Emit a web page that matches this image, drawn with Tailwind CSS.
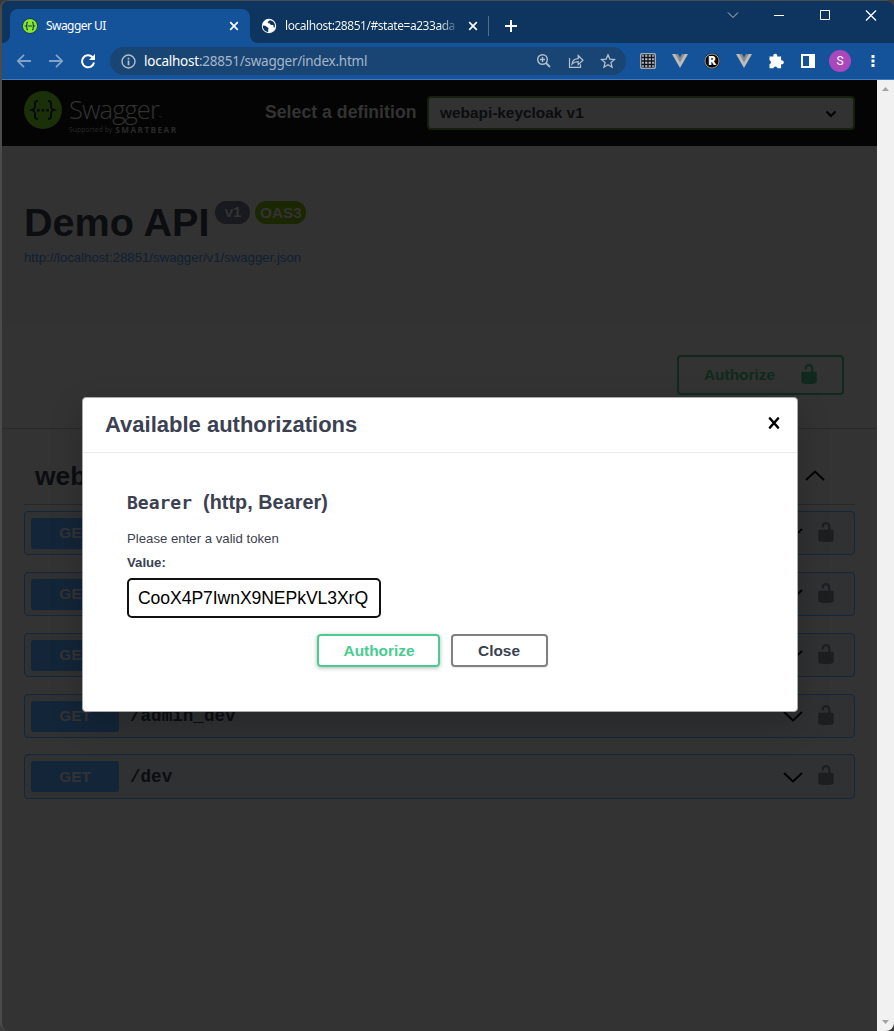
<!DOCTYPE html>
<html lang="en">
<head>
<meta charset="utf-8">
<title>Swagger UI</title>
<script src="https://cdn.jsdelivr.net/npm/@tailwindcss/browser@4"></script>
</head>
<body class="bg-[#3a3a3a] font-['Liberation_Sans',Arial,sans-serif]">
<svg class="hidden">
  <symbol id="lock" viewBox="0 0 20 20"><path d="M15.8 8H14V5.6C14 2.703 12.665 1 10 1 7.334 1 6 2.703 6 5.6V6h2v-.801C8 3.754 8.797 3 10 3c1.203 0 2 .754 2 2.199V8H4c-.553 0-1 .646-1 1.199V17c0 .549.428 1.139.951 1.307l1.197.387C5.672 18.861 6.55 19 7.1 19h5.8c.549 0 1.428-.139 1.951-.307l1.196-.387c.524-.167.953-.757.953-1.306V9.199C17 8.646 16.352 8 15.8 8z"/></symbol>
  <symbol id="down" viewBox="0 0 20 12"><path d="M1 2l9 8.500 9-8.500" fill="none" stroke="#000" stroke-width="1.800"/></symbol>
  <symbol id="vee" viewBox="0 0 16 14"><path d="M0 0h16L8 14z" fill="#bcbcbc"/><path d="M3.200 0h9.600L8 8.600z" fill="#8c8c8c"/><path d="M6 0h4L8 3.400z" fill="#14539a"/></symbol>
  <symbol id="close" viewBox="0 0 10 10"><path d="M1.200 1.200l7.600 7.600M8.800 1.200l-7.600 7.600" fill="none" stroke="#fff" stroke-width="1.700"/></symbol>
</svg>

<div class="relative flex h-[1031px] w-[894px] flex-col overflow-hidden rounded-lg border-l-2 border-t border-l-[#4b4b4b] border-t-[#4b4b4b] bg-[#333]">

  <!-- Tab strip -->
  <div class="flex h-[42px] shrink-0 items-end bg-[#0d355f] font-['Noto_Sans',sans-serif] text-[12px] text-white">
    <div class="flex h-[34px] w-2 items-end bg-[#14539a]"><div class="h-full w-full rounded-br-lg bg-[#0d355f]"></div></div>
    <div class="flex h-[34px] w-[240px] items-center rounded-t-lg bg-[#14539a] pl-[12px] pr-[11px]">
      <svg class="h-4 w-4" viewBox="0 0 16 16"><circle cx="8" cy="8" r="7.700" fill="#173647"/><circle cx="8" cy="8" r="7.100" fill="#85ea2d"/><path d="M6 4.300c-1.400 0-1.100.7-1.100 1.900S4.700 7.700 3.800 8c.9.300 1.100.6 1.100 1.800s-.3 1.900 1.100 1.900M10 4.300c1.400 0 1.100.7 1.100 1.900s.2 1.500 1.100 1.800c-.9.300-1.100.6-1.100 1.800s.3 1.900-1.100 1.900M5.700 8h4.600" fill="none" stroke="#173647" stroke-width="1.100"/></svg>
      <span class="ml-2 grow whitespace-nowrap tracking-[-0.550px]">Swagger UI</span>
      <svg class="h-[10px] w-[10px]"><use href="#close"/></svg>
    </div>
    <div class="h-[34px] w-[230px] bg-[#14539a]">
      <div class="flex h-full items-center rounded-bl-lg bg-[#0d355f] pl-[11px]">
        <svg class="h-4 w-4 shrink-0" viewBox="0 0 16 16"><circle cx="8" cy="8" r="7.200" fill="#fff"/><path d="M1.800 7.500l2.300.2c1 .1 1.300.6 1.700 1.200.5.700 1.600.3 1.700 1.200.1 1-.5 1.400-.3 2.400.1.700.2 1.300-.3 1.500C4.200 13.500 1.500 11 1.800 7.500zM8.600 2.200c-.2 1-1.800 1-1.900 2-.1.900.8 1.200 1.500 1.100.9-.1.800 1.200 1.600 1.500.9.300 2.100-.2 2.600.5.400.6-.2 1.400.3 2 .4.400.8.200 1 .1C14.800 5.800 12.500 2.500 8.600 2.200z" fill="#0d355f"/></svg>
        <span class="ml-2 w-[175px] whitespace-nowrap bg-linear-to-r from-white from-[88%] to-white/0 bg-clip-text tracking-[-0.450px] text-transparent">localhost:28851/#state=a233ada</span>
        <svg class="ml-2 h-[10px] w-[10px] shrink-0"><use href="#close"/></svg>
      </div>
    </div>
    <div class="flex h-[34px] w-[46px] items-center bg-[#0d355f]">
      <div class="ml-2 h-5 w-px bg-[#4f6d8d]"></div>
      <svg class="ml-4 h-3 w-3" viewBox="0 0 12 12"><path d="M6 0v12M0 6h12" stroke="#fff" stroke-width="2"/></svg>
    </div>
    <svg class="mb-4 ml-auto mr-[16px] h-[22px] w-[152px]" viewBox="0 0 152 22" fill="none" stroke="#fff"><path d="M2 7.500l5 5 5-5" stroke="#b8c5d2"/><path d="M48 10.500h10"/><path d="M94.500 5.500h9v9h-9z"/><path d="M140 5.500l10 10M150 5.500l-10 10" stroke-width="1.300"/></svg>
  </div>

  <!-- Toolbar -->
  <div class="flex h-[37px] shrink-0 items-center border-b border-[#3f78bd] bg-[#14539a]">
    <svg class="ml-[14px] h-4 w-[82px] shrink-0" viewBox="0 0 82 16" fill="none" stroke-width="1.800"><path d="M15 8H2M8 1.800L1.800 8 8 14.200M33 8h13M40 1.800L46.200 8 40 14.200" stroke="#7fa3cb"/><path d="M76.500 4.200A6 6 0 1 0 78 9.500" stroke="#fff" stroke-width="2"/><path d="M79 1v6h-6z" fill="#fff"/></svg>
    <div class="ml-3 flex h-7 w-[516px] shrink-0 items-center rounded-full bg-[#194574] pl-[11px] pr-[10px]">
      <svg class="h-[15px] w-[15px]" viewBox="0 0 15 15"><circle cx="7.500" cy="7.500" r="6.500" fill="none" stroke="#b2bfcd" stroke-width="1.400"/><path d="M7.500 6.500v4.700M7.500 3.700v1.700" stroke="#b2bfcd" stroke-width="1.700"/></svg>
      <span class="ml-2 grow whitespace-nowrap font-['Noto_Sans',sans-serif] text-[13.500px] tracking-[-0.240px] text-[#a6b6c9]"><span class="text-white">localhost</span>:28851/swagger/index.html</span>
      <svg class="h-4 w-20" viewBox="0 0 80 16" fill="none" stroke="#b2bfcd" stroke-width="1.400"><circle cx="6.500" cy="6.500" r="4.800"/><path d="M10 10l4 4" stroke-width="1.800"/><path d="M4 6.500h5M6.500 4v5"/><path d="M33.500 5v9.300h11v-3M36 11c.5-3.500 3-5.200 6.200-5.300V2.500L47 7.200l-4.800 4.500V8.600C39.500 8.600 37.500 9.300 36 11z" stroke-width="1.200"/><path d="M72 1.800l1.900 4.300 4.600.4L75 9.600l1 4.600-4-2.500-4 2.500 1-4.600-3.500-3.100 4.600-.4z" stroke-width="1.300"/></svg>
    </div>
    <div class="ml-[14px] flex shrink-0 items-center gap-4">
      <svg class="h-4 w-4" viewBox="0 0 16 16"><rect x=".5" y=".5" width="15" height="15" rx="1" fill="#b9c6d6" stroke="#aaa"/><path d="M4.500 1.500v13M8 1.500v13M11.500 1.500v13M1.500 4.500h13M1.500 8h13M1.500 11.500h13" stroke="#111" stroke-width="1.300"/><path d="M1.700 1.700h12.600v12.600H1.700z" fill="none" stroke="#222" stroke-width=".8"/></svg>
      <svg class="h-[14px] w-4"><use href="#vee"/></svg>
      <svg class="h-4 w-4" viewBox="0 0 16 16"><circle cx="8" cy="8" r="7.900" fill="#080808"/><circle cx="8" cy="8" r="7.100" fill="none" stroke="#d8d8d8" stroke-width=".8"/><text x="8" y="12.300" text-anchor="middle" font-size="12" font-weight="800" font-family="Open Sans" fill="#fff">R</text></svg>
      <svg class="h-[14px] w-4"><use href="#vee"/></svg>
      <svg class="h-4 w-4" viewBox="0 0 16 16"><path d="M1.500 3.500h4a2 2 0 1 1 3.600 0h4v4a2 2 0 1 1 0 3.700v4H9.500a2.100 2.100 0 0 0-4.100 0H1.500v-4a2.100 2.100 0 0 0 0-4z" fill="#fff"/></svg>
      <svg class="h-[14px] w-4" viewBox="0 0 16 14"><path fill-rule="evenodd" d="M1 0h14v14H1zM3 2v10h6V2z" fill="#fff"/></svg>
    </div>
    <div class="ml-[13px] flex h-[22px] w-[22px] shrink-0 items-center justify-center rounded-full bg-[#ab47bc] font-[Roboto,sans-serif] text-[12px] text-white">S</div>
    <svg class="ml-[19.500px] h-[14px] w-1" viewBox="0 0 4 14" fill="#fff"><path d="M.5 1h3v3h-3zM.5 5.500h3v3h-3zM.5 10h3v3h-3z"/></svg>
  </div>

  <!-- Viewport -->
  <div class="relative flex min-h-0 grow">
    <main class="w-[875px] shrink-0">
      <header class="flex h-[66px] items-center bg-[#040404] pl-[22px]">
        <svg class="mt-[-6px] h-[38px] w-[38px]" viewBox="0 0 38 38"><circle cx="19" cy="19" r="19" fill="#1b2f09"/><path d="M14 10c-3.500 0-3 1.600-3 4.500S10.500 18.200 8 19c2.500.8 3 1.600 3 4.500s-.5 4.500 3 4.500M24 10c3.500 0 3 1.600 3 4.500s.5 3.700 3 4.500c-2.500.8-3 1.600-3 4.500s.5 4.500-3 4.500" fill="none" stroke="#050b0e" stroke-width="2"/><path d="M13 18h2.500v2.500H13zM17.700 18h2.500v2.500h-2.500zM22.400 18h2.500v2.500h-2.500z" fill="#050b0e"/></svg>
        <div class="ml-[7px] mt-[2px] w-[120px] font-['Open_Sans',sans-serif] text-[#333]">
          <div class="h-[31px] whitespace-nowrap text-[25.500px] font-light leading-[31px] tracking-[-0.900px]">Swagger<span class="text-[4px] tracking-normal">™</span></div>
          <div class="flex h-[10px] items-center whitespace-nowrap text-[6.700px] leading-[10px] text-[#2a2a2a]"><span class="tracking-[0.100px]">Supported by</span><span class="ml-[3px] text-[8.200px] font-bold tracking-[1.450px]">SMARTBEAR</span></div>
        </div>
        <span class="ml-[76px] mt-[-2px] whitespace-nowrap text-[17.600px] font-bold tracking-[0.050px] text-[#333]">Select a definition</span>
        <div class="ml-auto mr-[22px] flex h-[34px] w-[428px] items-center justify-between rounded border-2 border-[#141f0c] bg-[#323232] pl-[11px] pr-[16px] text-[15.400px] font-bold text-[#0c0d10]">
          <span>webapi-keycloak v1</span>
          <svg class="mt-[2px] h-2 w-3" viewBox="0 0 12 8"><path d="M1.500 1.500L6 6l4.500-4.500" fill="none" stroke="#000" stroke-width="2"/></svg>
        </div>
      </header>

      <section class="h-[176px] bg-[#323232] pl-[22px] pt-[54px]">
        <div class="flex h-[47px] items-start">
          <h1 class="whitespace-nowrap text-[39.600px] font-bold leading-[44px] text-[#0c0d10]">Demo API</h1>
          <span class="ml-[6px] mt-px flex h-[23px] w-[35px] items-center justify-center rounded-full bg-[#191a1f] text-[15px] font-bold text-[#333]">v1</span>
          <span class="ml-[5px] mt-px flex h-[23px] w-[51px] items-center justify-center rounded-full bg-[#1b2700] text-[15.400px] font-bold text-[#333]">OAS3</span>
        </div>
        <div class="mt-[2px] text-[13.200px] leading-[18px] text-[#0f2033]">http://localhost:28851/swagger/v1/swagger.json</div>
      </section>

      <section class="flex h-[107px] justify-end border-b border-[#292929] bg-[#333] pr-[33px] pt-[33px]">
        <div class="flex h-10 w-[167px] items-center justify-between rounded border-2 border-[#0f2a1d] pl-[25px] pr-[22px] text-[15.400px] font-bold text-[#0f2a1d]">
          <span>Authorize</span><svg class="mb-[2px] h-[22px] w-[22px] fill-current"><use href="#lock"/></svg>
        </div>
      </section>

      <section class="px-[22px]">
        <div class="mb-[6px] flex h-[76px] items-center justify-between border-b border-[#272829] pl-[11px] pr-[30px] pt-[19px] text-[26.400px] font-bold text-[#0c0d10]">
          <span class="mt-px">webapi-keycloak</span>
          <svg class="h-3 w-5 rotate-180"><use href="#down"/></svg>
        </div>
        <div class="flex flex-col gap-[17px] font-['Liberation_Mono',monospace] text-[17.600px] font-bold text-[#0c0d10]">
          <div class="flex h-[44px] items-center rounded border border-[#13263b] bg-[#2f3133] pl-[6px] pr-[17px]">
            <span class="flex h-[31px] w-[88px] items-center justify-center rounded-[3px] bg-[#132539] font-['Liberation_Sans',sans-serif] text-[15.400px] text-[#333]">GET</span><span class="ml-3 grow"></span>
            <svg class="h-3 w-5"><use href="#down"/></svg><svg class="mb-[3px] ml-3 h-[22px] w-[22px] fill-[#1d1e20]"><use href="#lock"/></svg>
          </div>
          <div class="flex h-[44px] items-center rounded border border-[#13263b] bg-[#2f3133] pl-[6px] pr-[17px]">
            <span class="flex h-[31px] w-[88px] items-center justify-center rounded-[3px] bg-[#132539] font-['Liberation_Sans',sans-serif] text-[15.400px] text-[#333]">GET</span><span class="ml-3 grow"></span>
            <svg class="h-3 w-5"><use href="#down"/></svg><svg class="mb-[3px] ml-3 h-[22px] w-[22px] fill-[#1d1e20]"><use href="#lock"/></svg>
          </div>
          <div class="flex h-[44px] items-center rounded border border-[#13263b] bg-[#2f3133] pl-[6px] pr-[17px]">
            <span class="flex h-[31px] w-[88px] items-center justify-center rounded-[3px] bg-[#132539] font-['Liberation_Sans',sans-serif] text-[15.400px] text-[#333]">GET</span><span class="ml-3 grow"></span>
            <svg class="h-3 w-5"><use href="#down"/></svg><svg class="mb-[3px] ml-3 h-[22px] w-[22px] fill-[#1d1e20]"><use href="#lock"/></svg>
          </div>
          <div class="flex h-[44px] items-center rounded border border-[#13263b] bg-[#2f3133] pl-[6px] pr-[17px]">
            <span class="flex h-[31px] w-[88px] items-center justify-center rounded-[3px] bg-[#132539] font-['Liberation_Sans',sans-serif] text-[15.400px] text-[#333]">GET</span><span class="ml-[11px] grow">/admin_dev</span>
            <svg class="h-3 w-5"><use href="#down"/></svg><svg class="mb-[3px] ml-3 h-[22px] w-[22px] fill-[#1d1e20]"><use href="#lock"/></svg>
          </div>
          <div class="-mt-px flex h-[45px] items-center rounded border border-[#13263b] bg-[#2f3133] pl-[6px] pr-[17px]">
            <span class="flex h-[31px] w-[88px] items-center justify-center rounded-[3px] bg-[#132539] font-['Liberation_Sans',sans-serif] text-[15.400px] text-[#333]">GET</span><span class="ml-[11px] mt-[2px] grow">/dev</span>
            <svg class="h-3 w-5"><use href="#down"/></svg><svg class="mb-[3px] ml-3 h-[22px] w-[22px] fill-[#1d1e20]"><use href="#lock"/></svg>
          </div>
        </div>
      </section>
    </main>

    <!-- Scrollbar -->
    <div class="flex w-[17px] flex-col items-center justify-between bg-[#f1f1f1] pb-[7px] pt-[7px]">
      <svg class="h-1 w-[7px]" viewBox="0 0 7 4"><path d="M0 4L3.500 0 7 4z" fill="#a3a3a3"/></svg>
      <svg class="h-1 w-[7px]" viewBox="0 0 7 4"><path d="M0 0l3.500 4L7 0z" fill="#a3a3a3"/></svg>
    </div>

    <!-- Authorization dialog -->
    <div class="absolute left-[80px] top-[317px] h-[315px] w-[716px] rounded border border-[#a9aaab] bg-white text-[#3b4151] shadow-[0_11px_33px_rgba(0,0,0,0.2)]">
      <div class="flex h-[55px] items-center justify-between border-b border-[#ebebeb] pl-[22px] pr-[17px]">
        <h3 class="mt-[-2px] whitespace-nowrap text-[22px] font-bold">Available authorizations</h3>
        <svg class="mt-[-4px] h-3 w-3" viewBox="0 0 12 12"><path d="M2 1.500l8 9M10 1.500l-8 9" stroke="#000" stroke-width="2.600" stroke-linecap="round"/></svg>
      </div>
      <div class="pl-[44px] pt-[37px]">
        <h4 class="flex h-[26px] items-center whitespace-nowrap text-[19.800px] font-bold"><code class="mt-[-2px] w-[76px] font-['DejaVu_Sans_Mono',monospace] text-[18px]">Bearer</code><span class="tracking-[0.050px]">(http, Bearer)</span></h4>
        <p class="mt-[14px] text-[13.200px] leading-[18px]">Please enter a valid token</p>
        <p class="mt-[6px] text-[13.200px] font-bold leading-[18px]">Value:</p>
        <div class="mt-[6px] flex h-10 w-[254px] items-center rounded-[5px] border-2 border-[#101010] px-[9px]">
          <div class="flex w-full justify-end whitespace-nowrap pr-[2px] text-[17.600px] tracking-[-0.080px] text-black"><span>CooX4P7IwnX9NEPkVL3XrQ</span></div>
        </div>
        <div class="ml-[189.500px] mt-4 flex gap-[11px] text-[15.400px] font-bold">
          <div class="flex h-[33px] w-[123px] items-center justify-center rounded border-2 border-[#49cc90] pl-[2px] text-[#49cc90] shadow-[0_1px_4px_rgba(0,0,0,0.3)]">Authorize</div>
          <div class="flex h-[33px] w-[97px] items-center justify-center rounded border-2 border-[#808080] shadow-[0_1px_2px_rgba(0,0,0,0.1)]">Close</div>
        </div>
      </div>
    </div>
  </div>
</div>
</body>
</html>
